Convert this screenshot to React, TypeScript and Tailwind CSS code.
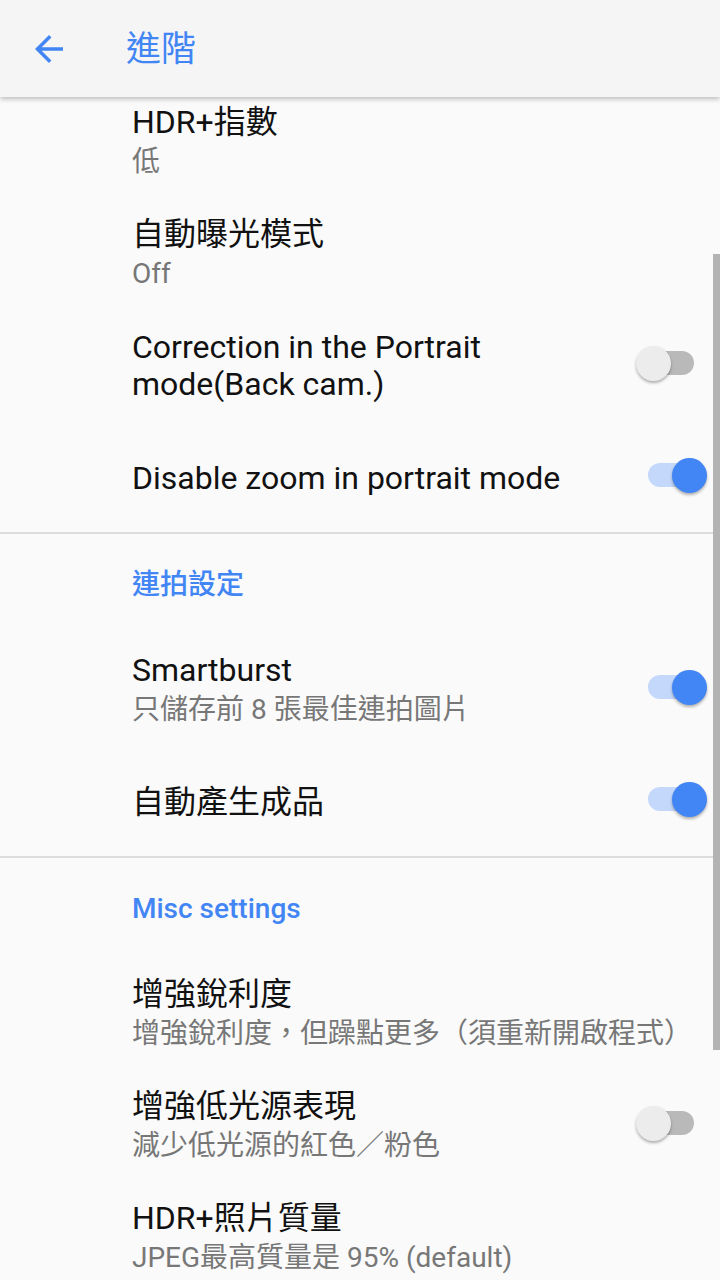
import React from "react";

const FONT = "font-['Roboto','Noto_Sans_CJK_TC',sans-serif]";

type Item = {
  title: string;
  summary?: string;
  toggle?: "on" | "off";
};

const GROUP_1: Item[] = [
  { title: "HDR+指數", summary: "低" },
  { title: "自動曝光模式", summary: "Off" },
  { title: "Correction in the Portrait mode(Back cam.)", toggle: "off" },
  { title: "Disable zoom in portrait mode", toggle: "on" },
];

const GROUP_2: Item[] = [
  { title: "Smartburst", summary: "只儲存前 8 張最佳連拍圖片", toggle: "on" },
  { title: "自動產生成品", toggle: "on" },
];

const GROUP_3: Item[] = [
  { title: "增強銳利度", summary: "增強銳利度，但躁點更多（須重新開啟程式）" },
  { title: "增強低光源表現", summary: "減少低光源的紅色／粉色", toggle: "off" },
  { title: "HDR+照片質量", summary: "JPEG最高質量是 95% (default)" },
];

function Switch({ on }: { on: boolean }) {
  return (
    <div className="relative mb-[6px] h-[35px] w-[71px] shrink-0">
      <div
        className={`absolute left-[12px] top-[5.5px] h-[24px] w-[46px] rounded-full ${
          on ? "bg-[#c4d8fb]" : "bg-[#b9b9b9]"
        }`}
      />
      <div
        className={`absolute top-0 h-[35px] w-[35px] rounded-full shadow-[0_2px_3px_rgba(0,0,0,0.3)] ${
          on ? "right-0 bg-[#4285f4]" : "left-0 bg-[#ececec]"
        }`}
      />
    </div>
  );
}

function Row({ item }: { item: Item }) {
  return (
    <div className="flex min-h-[112px] items-center pl-[132px] pr-[13px] pt-[18px] pb-[14px]">
      <div className="flex-1 pr-[40px]">
        <div className="text-[32px] leading-[37px] text-[#111]">{item.title}</div>
        {item.summary && (
          <div className="mt-[2px] whitespace-nowrap text-[28px] leading-[38px] text-[#777]">
            {item.summary}
          </div>
        )}
      </div>
      {item.toggle && <Switch on={item.toggle === "on"} />}
    </div>
  );
}

function Category({ label }: { label: string }) {
  return (
    <div>
      <div className="h-[2px] bg-[#dcdcdc]" />
      <div className="flex h-[98px] items-center pl-[132px] pt-[4px]">
        <span className="text-[28px] font-medium text-[#4285f4]">{label}</span>
      </div>
    </div>
  );
}

export default function App() {
  return (
    <div className={`relative h-[1280px] w-[720px] overflow-hidden bg-[#fafafa] ${FONT}`}>
      {/* Toolbar */}
      <header className="relative z-10 flex h-[97px] items-center bg-[#f5f5f5] shadow-[0_2px_5px_rgba(0,0,0,0.25)]">
        <div className="flex w-[126px] justify-start pl-[28px]">
          <svg width="42" height="42" viewBox="0 0 24 24" fill="#4285f4">
            <path d="M20 11H7.83l5.59-5.59L12 4l-8 8 8 8 1.41-1.41L7.83 13H20v-2z" />
          </svg>
        </div>
        <h1 className="mt-[3px] text-[35px] font-normal text-[#4285f4]">進階</h1>
      </header>

      {/* Preference list */}
      <div className="-mt-[13px]">
        {GROUP_1.map((item) => (
          <Row key={item.title} item={item} />
        ))}
        <Category label="連拍設定" />
        {GROUP_2.map((item) => (
          <Row key={item.title} item={item} />
        ))}
        <Category label="Misc settings" />
        {GROUP_3.map((item) => (
          <Row key={item.title} item={item} />
        ))}
      </div>

      {/* Scrollbar */}
      <div className="absolute right-0 top-[254px] h-[796px] w-[7px] bg-[#b3b3b3]" />
    </div>
  );
}
